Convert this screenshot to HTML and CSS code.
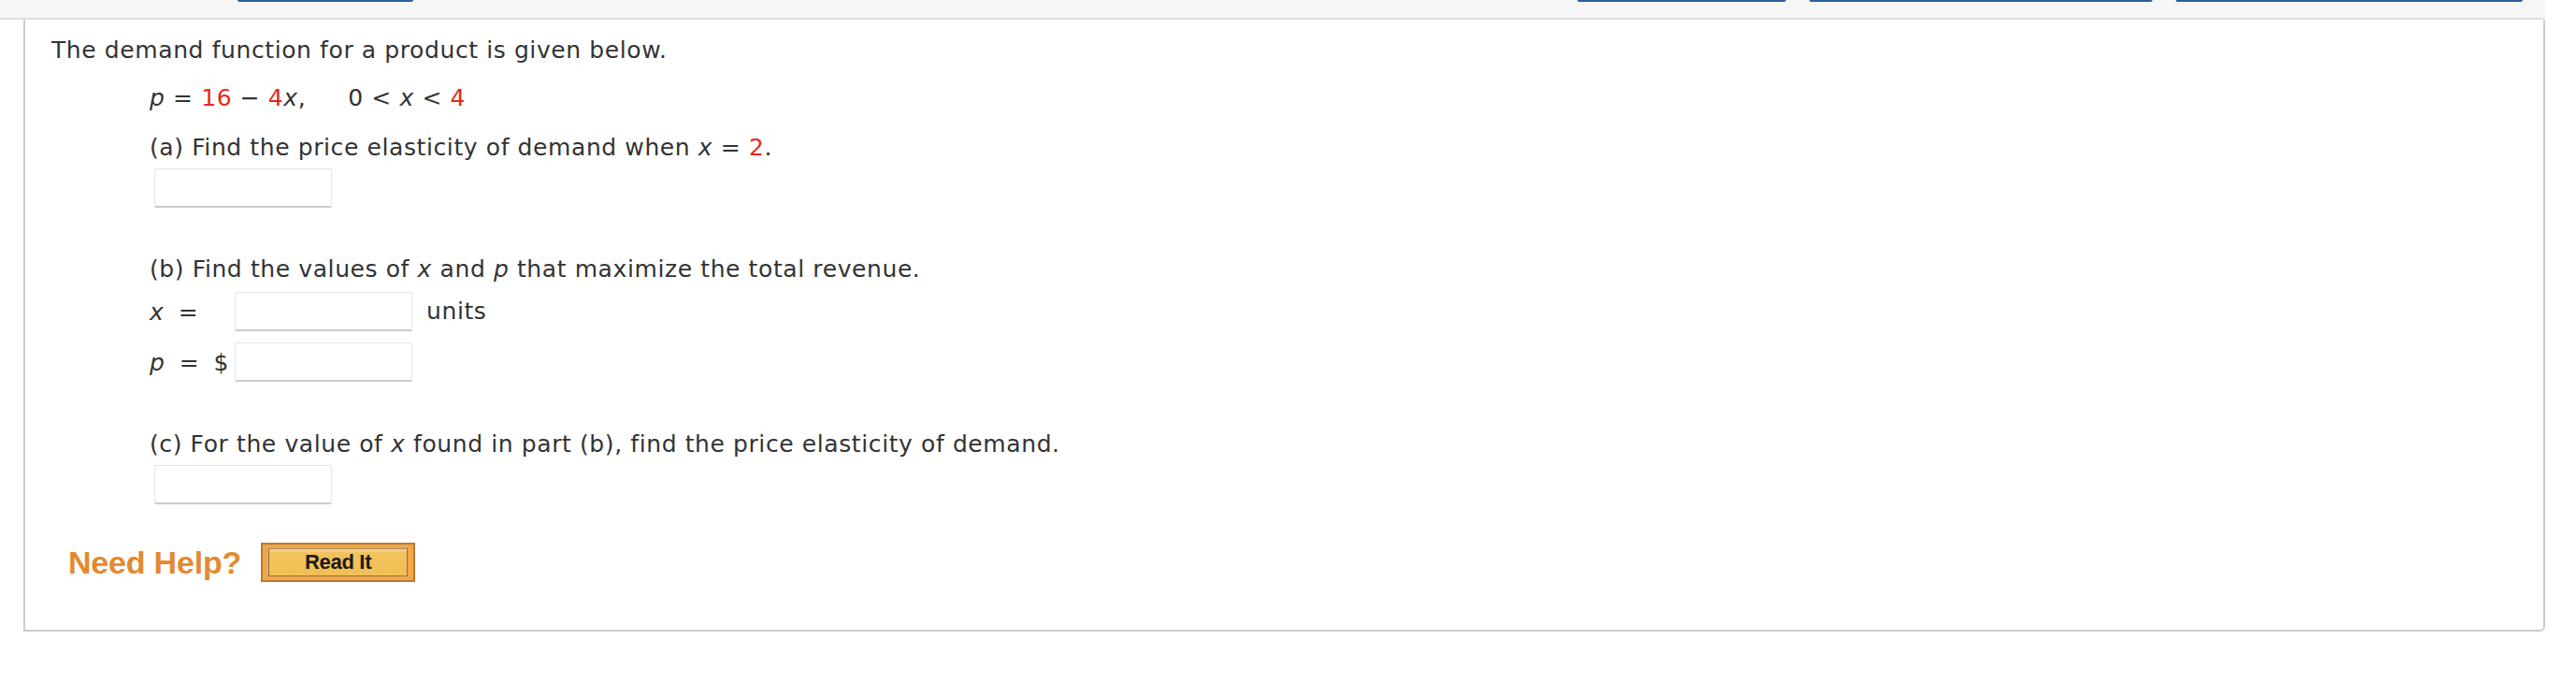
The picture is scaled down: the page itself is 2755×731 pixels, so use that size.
FILE: index.html
```html
<!DOCTYPE html>
<html>
<head>
<meta charset="utf-8">
<link rel="stylesheet" href="styles.css">
</head>
<body>
<div class="page">
  <div class="toolbar">
    <span class="tab tab1"></span>
    <span class="tab tab2"></span>
    <span class="tab tab3"></span>
    <span class="tab tab4"></span>
  </div>
  <div class="question">
    <div class="intro">The demand function for a product is given below.</div>
    <div class="indent">
      <div class="line eq"><i>p</i> = <span class="red">16</span> − <span class="red">4</span><i>x</i>,<span class="range">0 &lt; <i>x</i> &lt; <span class="red">4</span></span></div>
      <div class="line parta">(a) Find the price elasticity of demand when <i>x</i> = <span class="red">2</span>.</div>
      <div class="answer solo"></div>
      <div class="line partb">(b) Find the values of <i>x</i> and <i>p</i> that maximize the total revenue.</div>
      <div class="row rowx">
        <span class="label"><i>x</i>&nbsp; =</span>
        <span class="answer inrow"></span>
        <span class="unit">units</span>
      </div>
      <div class="row rowp">
        <span class="label"><i>p</i>&nbsp; = &nbsp;$</span>
        <span class="answer inrow"></span>
      </div>
      <div class="line partc">(c) For the value of <i>x</i> found in part (b), find the price elasticity of demand.</div>
      <div class="answer solo"></div>
    </div>
    <div class="help">
      <span class="need">Need Help?</span>
      <span class="readit"><span class="readit-inner">Read It</span></span>
    </div>
  </div>
</div>
</body>
</html>
```

FILE: styles.css
```css
html, body {
  margin: 0;
  padding: 0;
  background: #ffffff;
}
.page {
  width: 2722px;
  font-family: "DejaVu Sans", Verdana, sans-serif;
  font-size: 25px;
  letter-spacing: 0.6px;
  color: #333333;
}
.toolbar {
  height: 19px;
  background: #f6f6f6;
  border-bottom: 2px solid #dddddd;
  border-bottom-right-radius: 4px;
  display: flex;
  align-items: flex-start;
}
.tab {
  display: block;
  height: 2px;
  background: #2b5f9c;
  border-radius: 0 0 2px 2px;
}
.tab1 { margin-left: 254px; width: 188px; }
.tab2 { margin-left: 1245px; width: 223px; }
.tab3 { margin-left: 25px; width: 367px; }
.tab4 { margin-left: 25px; width: 371px; }
.question {
  margin-left: 25px;
  border: 2px solid #cccccc;
  border-top: none;
  border-bottom-right-radius: 6px;
  padding: 18px 0 0 28px;
  height: 654px;
  box-sizing: border-box;
}
.line, .intro {
  line-height: 30px;
  height: 30px;
  white-space: nowrap;
}
.indent {
  margin-left: 105px;
}
.eq { margin-top: 21px; }
.range { margin-left: 45px; }
.parta { margin-top: 23px; }
.red { color: #e5291d; }
i { font-style: italic; }
.answer {
  display: block;
  width: 190px;
  height: 42px;
  box-sizing: border-box;
  border: 1px solid #e4e4e4;
  border-bottom: 2px solid #cbcbcb;
  border-radius: 2px;
  background: #ffffff;
  margin-top: 7px;
}
.answer.solo { margin-left: 5px; }
.partb { margin-top: 51px; }
.row {
  display: flex;
  align-items: center;
  height: 42px;
}
.rowx { margin-top: 9px; }
.rowp { margin-top: 12px; }
.label {
  width: 91px;
  white-space: nowrap;
  letter-spacing: 0;
}
.answer.inrow { margin-top: 0; }
.unit {
  margin-left: 15px;
  align-self: flex-start;
  line-height: 30px;
  margin-top: 6px;
}
.partc { margin-top: 52px; }
.help {
  display: flex;
  align-items: center;
  margin-top: 41px;
  margin-left: 18px;
}
.need {
  font-family: "Liberation Sans", Arial, sans-serif;
  font-weight: bold;
  font-size: 34px;
  color: #e38a30;
  letter-spacing: -0.2px;
}
.readit {
  margin-left: 21px;
  width: 165px;
  height: 42px;
  box-sizing: border-box;
  border: 2px solid #b9782f;
  background: #f0a74a;
  padding: 4px 6px;
  display: flex;
}
.readit-inner {
  flex: 1;
  border: 1px solid #8d7450;
  border-top-color: #a58a62;
  background: linear-gradient(#f7d79a 0px, #f2c25b 4px, #f1bf57 100%);
  font-family: "Liberation Sans", Arial, sans-serif;
  font-weight: bold;
  font-size: 22px;
  color: #1a1a1a;
  display: flex;
  align-items: center;
  justify-content: center;
  letter-spacing: -0.3px;
}
```
